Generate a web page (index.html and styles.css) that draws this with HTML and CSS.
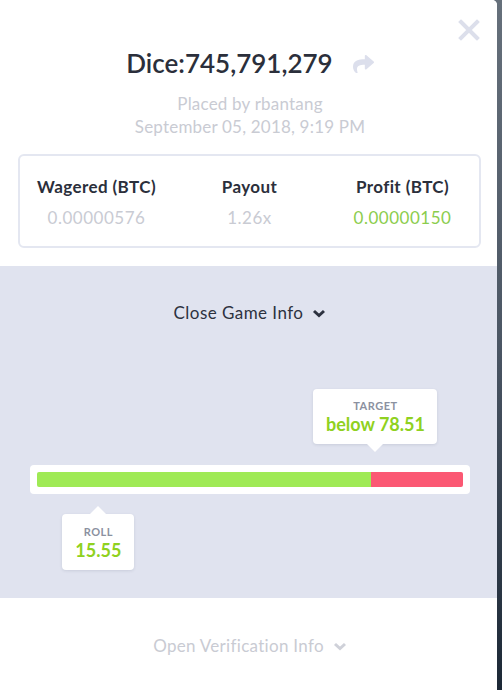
FILE: index.html
```html
<!DOCTYPE html>
<html>
<head>
<meta charset="utf-8">
<link rel="stylesheet" href="styles.css">
</head>
<body>
<div class="frame">
  <div class="modal">
    <button class="close" aria-label="Close">
      <svg width="22" height="22" viewBox="0 0 22 22"><path d="M3 3L19 19M19 3L3 19" stroke="#dcdfeb" stroke-width="4" stroke-linecap="square"/></svg>
    </button>
    <header class="head">
      <h1 class="title">Dice:745,791,279
        <svg class="share" width="21" height="18" viewBox="0 0 512 430"><path fill="#dcdfec" d="M503.691 153.836L327.687 1.851C312.281-11.454 288-.653 288 20.015v80.053C127.371 101.907 0 134.1 0 286.326c0 61.441 39.581 122.309 83.333 154.132 13.653 9.931 33.111-2.533 28.077-18.631C66.066 276.814 132.917 238.316 288 236.085V324c0 20.7 24.3 31.453 39.687 18.164l176.004-152c11.071-9.562 11.086-26.753 0-36.328z"/></svg>
      </h1>
      <p class="meta">Placed by rbantang</p>
      <p class="meta">September 05, 2018, 9:19 PM</p>
    </header>
    <section class="stats">
      <div class="stat"><div class="label">Wagered (BTC)</div><div class="value">0.00000576</div></div>
      <div class="stat"><div class="label">Payout</div><div class="value">1.26x</div></div>
      <div class="stat"><div class="label">Profit (BTC)</div><div class="value green">0.00000150</div></div>
    </section>
    <section class="game">
      <div class="toggle dark">Close Game Info
        <svg width="14" height="9" viewBox="0 0 14 9"><path d="M2 2L7 6.5L12 2" fill="none" stroke="#2d3240" stroke-width="3"/></svg>
      </div>
      <div class="stage">
        <div class="row top">
          <div class="tip tip-down" style="left:78.51%">
            <div class="tip-label">TARGET</div>
            <div class="tip-value">below 78.51</div>
          </div>
        </div>
        <div class="track">
          <div class="bar">
            <div class="win" style="width:78.51%"></div>
            <div class="lose"></div>
          </div>
        </div>
        <div class="row bottom">
          <div class="tip tip-up" style="left:14.4%">
            <div class="tip-label">ROLL</div>
            <div class="tip-value">15.55</div>
          </div>
        </div>
      </div>
    </section>
    <footer class="foot">
      <div class="toggle light">Open Verification Info
        <svg width="14" height="9" viewBox="0 0 14 9"><path d="M2 2L7 6.5L12 2" fill="none" stroke="#cfd1d9" stroke-width="3"/></svg>
      </div>
    </footer>
  </div>
</div>
</body>
</html>
```
FILE: styles.css
```css
html, body {
  margin: 0;
  padding: 0;
}
body {
  width: 502px;
  height: 690px;
  background: linear-gradient(180deg, #66707b 0%, #4b5664 50%, #1c2836 100%);
  font-family: Lato, "Noto Sans", sans-serif;
  overflow: hidden;
}
.frame {
  width: 497px;
  height: 690px;
  overflow: hidden;
  border-top-right-radius: 5px;
  background: #fff;
}
.modal {
  width: 500px;
  position: relative;
  background: #fff;
}
.close {
  position: absolute;
  top: 19px;
  right: 20px;
  border: 0;
  background: none;
  padding: 0;
  width: 22px;
  height: 22px;
  display: flex;
}
.head {
  padding-top: 46px;
  text-align: center;
}
.title {
  margin: 0;
  font-size: 26px;
  font-weight: 600;
  color: #2b2f3b;
  line-height: 34px;
  height: 34px;
  display: flex;
  justify-content: center;
  align-items: center;
  gap: 20px;
}
.share {
  margin-top: 2px;
}
.meta {
  margin: 0;
  font-size: 17px;
  letter-spacing: 0.2px;
  line-height: 23px;
  color: #c9cbd3;
}
.meta:first-of-type {
  margin-top: 12px;
}
.stats {
  margin: 16px 19px 0 18px;
  border: 2px solid #e4e7f1;
  border-radius: 6px;
  display: grid;
  grid-template-columns: 1fr 1fr 1fr;
  padding: 21px 0 18px;
}
.stat {
  text-align: center;
}
.label {
  font-size: 17px;
  font-weight: 700;
  letter-spacing: 0.4px;
  color: #2b2f3b;
  line-height: 20px;
}
.value {
  margin-top: 11px;
  font-size: 17px;
  letter-spacing: 0.5px;
  color: #c9cbd3;
  line-height: 20px;
}
.value.green {
  color: #8bcd4d;
}
.game {
  margin-top: 18px;
  background: #e0e3ef;
  height: 332px;
  padding-top: 36px;
  box-sizing: border-box;
}
.toggle {
  display: flex;
  justify-content: center;
  align-items: center;
  gap: 9px;
  font-size: 17px;
  letter-spacing: 0.45px;
  line-height: 22px;
  height: 22px;
}
.toggle.dark {
  color: #2d3240;
}
.toggle.light {
  color: #c9cbd3;
  letter-spacing: 0.3px;
}
.stage {
  margin-top: 65px;
}
.row {
  position: relative;
  margin: 0 37px;
  height: 76px;
}
.tip {
  position: absolute;
  transform: translateX(-50%);
  background: #fff;
  border-radius: 4px;
  box-shadow: 0 1px 3px rgba(40, 50, 80, 0.12);
  text-align: center;
  box-sizing: border-box;
}
.top .tip {
  top: 0;
  width: 124px;
  height: 55px;
  padding-top: 9px;
  transform: translateX(calc(-50% + 4px));
}
.bottom .tip {
  top: 20px;
  width: 72px;
  height: 56px;
  padding-top: 10px;
}
.tip::after {
  content: "";
  position: absolute;
  left: 50%;
  margin-left: -8px;
  border-left: 8px solid transparent;
  border-right: 8px solid transparent;
}
.tip-down::after {
  top: 100%;
  border-top: 8px solid #fff;
}
.tip-up::after {
  bottom: 100%;
  border-bottom: 8px solid #fff;
}
.tip-label {
  font-size: 11px;
  font-weight: 700;
  color: #8b91a0;
  line-height: 16px;
  letter-spacing: 0.5px;
}
.tip-value {
  font-size: 18px;
  font-weight: 700;
  color: #8fd120;
  line-height: 20px;
}
.track {
  margin: 0 30px;
  background: #fff;
  border-radius: 4px;
  padding: 7px;
}
.bar {
  display: flex;
  height: 15px;
  border-radius: 2px;
  overflow: hidden;
}
.win {
  background: #9fea55;
}
.lose {
  flex: 1;
  background: #fb5873;
}
.foot {
  padding-top: 37px;
}
```
